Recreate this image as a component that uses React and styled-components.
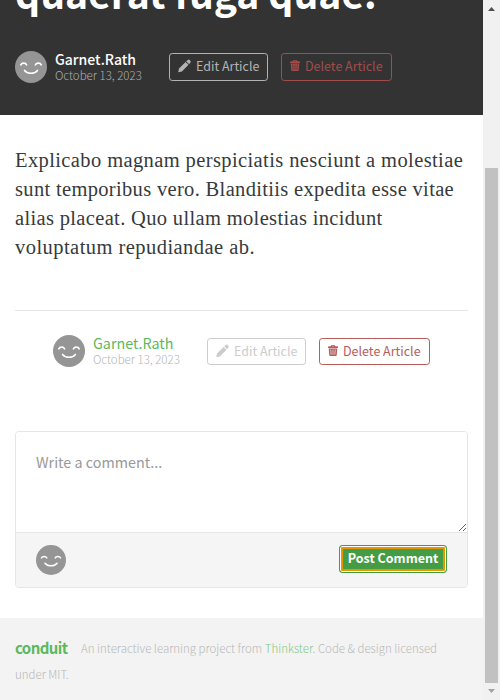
import React from "react";
import styled, { createGlobalStyle } from "styled-components";

const sans = `"Noto Sans CJK SC", "Noto Sans", sans-serif`;

const GlobalStyle = createGlobalStyle`
  * { box-sizing: border-box; }
  body { margin: 0; background: #fff; font-family: ${sans}; }
`;

const Window = styled.div`
  display: flex;
  width: 500px;
  height: 700px;
  overflow: hidden;
`;

const Page = styled.main`
  width: 483px;
  display: flex;
  flex-direction: column;
`;

const Banner = styled.header`
  height: 115px;
  flex: none;
  padding: 0 15px;
  background: #333;
  overflow: hidden;
`;

const Title = styled.h1`
  margin: -38px 0 0;
  height: 89px;
  line-height: 60px;
  font-size: 39.1px;
  font-weight: 700;
  color: #fff;
  white-space: nowrap;
`;

const Meta = styled.div`
  display: flex;
  height: 32px;
  padding-left: ${(p) => (p.$inset ? "53px" : "0")};
`;

const Face = styled.svg`
  display: block;
  flex: none;
`;

const Info = styled.div`
  width: 114px;
  padding-left: 8px;
  display: flex;
  flex-direction: column;
  white-space: nowrap;
`;

const Author = styled.a`
  height: 17px;
  line-height: 16px;
  font-size: ${(p) => (p.$dark ? 14 : 14.3)}px;
  font-weight: ${(p) => (p.$dark ? 500 : 400)};
  color: ${(p) => (p.$dark ? "#fff" : "#5cb85c")};
`;

const DateText = styled.span`
  line-height: 15px;
  font-size: 11.5px;
  font-weight: 300;
  color: ${(p) => (p.$dark ? "#b0b0b0" : "#b5b5b5")};
`;

const Actions = styled.div`
  display: flex;
  gap: 13px;
  padding: ${(p) => (p.$dark ? "2px" : "3px")} 0 0 8px;
`;

const OutlineButton = styled.button`
  display: flex;
  align-items: center;
  width: ${(p) => (p.$danger ? 111 : 99)}px;
  height: ${(p) => (p.$dark ? 28 : 27)}px;
  padding: 0 0 ${(p) => (p.$dark ? 3 : 2)}px 8px;
  border: 1px solid currentColor;
  border-radius: 3.2px;
  background: transparent;
  font: 400 12.5px ${sans};
  white-space: nowrap;
  color: ${(p) =>
    p.$danger ? (p.$dark ? "#a24c4b" : "#b85c5c") : p.$dark ? "#b3b3b3" : "#ccc"};
  svg { flex: none; margin-right: 5px; }
`;

const Body = styled.p`
  margin: 31px 15px 0;
  height: 164px;
  font-family: "Liberation Serif", serif;
  font-size: 20.5px;
  line-height: 29px;
  color: #373a3c;
  white-space: nowrap;
`;

const Line = styled.span`
  display: block;
  letter-spacing: ${(p) => p.$spacing}px;
`;

const Rule = styled.hr`
  width: 453px;
  height: 1px;
  margin: 0 15px 24px;
  border: 0;
  flex: none;
  background: #e5e5e5;
`;

const CommentCard = styled.form`
  width: 453px;
  height: 157px;
  margin: 64px 15px 0;
  border: 1px solid #e5e5e5;
  border-radius: 4px;
  overflow: hidden;
  flex: none;
`;

const CommentInput = styled.textarea`
  display: block;
  width: 100%;
  height: 100px;
  padding: 18px 20px;
  border: 0;
  outline: 0;
  background: #fff;
  font: 400 14.35px/24px ${sans};
  &::placeholder { color: #999; opacity: 1; }
`;

const CommentFooter = styled.div`
  display: flex;
  justify-content: space-between;
  height: 55px;
  padding: 12px 20px;
  border-top: 1px solid #e5e5e5;
  background: #f5f5f5;
`;

const PostButton = styled.button`
  width: 108px;
  height: 28px;
  padding: 0 0 3px;
  border: 1px solid #449d44;
  border-radius: 3.2px;
  box-shadow: inset 0 0 0 1px #fff, inset 0 0 0 3px #e59700;
  background: #449d44;
  color: #fff;
  font: 700 12.5px ${sans};
  white-space: nowrap;
`;

const Footer = styled.footer`
  margin-top: 30px;
  height: 82px;
  flex: none;
  padding: 17px 15px 0;
  background: #f3f3f3;
  font-size: 11.48px;
  font-weight: 300;
  line-height: 26px;
  color: #b8b8b8;
  white-space: nowrap;
`;

const FooterRow = styled.div`
  display: flex;
  height: 26px;
`;

const Logo = styled.a`
  width: 66px;
  font: 700 15px/26px ${sans};
  letter-spacing: -0.6px;
  color: #5cb85c;
`;

const FooterLink = styled.a`
  color: #5cb85c;
  opacity: 0.75;
`;

const Track = styled.aside`
  display: flex;
  flex-direction: column;
  align-items: center;
  width: 17px;
  height: 700px;
  background: #f1f1f1;
  svg { display: block; flex: none; }
`;

const Thumb = styled.div`
  width: 13px;
  height: 515px;
  margin-top: 151px;
  background: #c1c1c1;
`;

function Avatar({ size = 32 }) {
  return (
    <Face width={size} height={size} viewBox="0 0 32 32">
      <circle cx="16" cy="16" r="16" fill="#959595" />
      <g fill="none" stroke="#fff" strokeWidth="1.6" strokeLinecap="round">
        <path d="M5.8 13.8C6.8 11.6 10.6 11.6 11.6 13.8" />
        <path d="M20.4 13.8C21.4 11.6 25.2 11.6 26.2 13.8" />
        <path d="M9.6 19.4C12.6 23.2 19.4 23.2 22.4 19.4" />
      </g>
    </Face>
  );
}

function Pencil() {
  return (
    <svg width="13" height="14" viewBox="0 0 13 14" fill="currentColor">
      <path d="M0.2 13.2L1 9.5L7.6 2.9L10.5 5.8L3.9 12.4ZM8.2 2.3L9.8 0.9Q10.8 0.2 11.7 1.1L12.3 1.7Q13.1 2.6 12.4 3.5L11.1 5.2Z" />
    </svg>
  );
}

function Trash() {
  return (
    <svg width="10" height="12" viewBox="0 0 10 12" fill="currentColor">
      <path d="M0 2.2Q0 1.3 1 1.3H2.7Q3 0 4 0H6Q7 0 7.3 1.3H9Q10 1.3 10 2.2V3H0ZM3.8 1.3H6.2Q6 .8 5.7 .8H4.3Q4 .8 3.8 1.3Z" />
      <path
        fillRule="evenodd"
        d="M.7 3.4H9.3L8.7 10.2Q8.6 10.9 7.9 10.9H2.1Q1.4 10.9 1.3 10.2ZM2.5 4.6L2.8 9.8H3.4L3.1 4.6ZM4.7 4.6V9.8H5.3V4.6ZM6.9 4.6L6.6 9.8H7.2L7.5 4.6Z"
      />
    </svg>
  );
}

function ArticleMeta({ dark }) {
  return (
    <Meta $inset={!dark}>
      <Avatar />
      <Info>
        <Author $dark={dark}>Garnet.Rath</Author>
        <DateText $dark={dark}>October 13, 2023</DateText>
      </Info>
      <Actions $dark={dark}>
        <OutlineButton $dark={dark}><Pencil />Edit Article</OutlineButton>
        <OutlineButton $dark={dark} $danger><Trash />Delete Article</OutlineButton>
      </Actions>
    </Meta>
  );
}

export default function App() {
  return (
    <Window>
      <GlobalStyle />
      <Page>
        <Banner>
          <Title>quaerat fuga quae.</Title>
          <ArticleMeta dark />
        </Banner>
        <Body>
          <Line $spacing={0.39}>Explicabo magnam perspiciatis nesciunt a molestiae</Line>
          <Line $spacing={0.33}>sunt temporibus vero. Blanditiis expedita esse vitae</Line>
          <Line $spacing={0.34}>alias placeat. Quo ullam molestias incidunt</Line>
          <Line $spacing={0.45}>voluptatum repudiandae ab.</Line>
        </Body>
        <Rule />
        <ArticleMeta />
        <CommentCard>
          <CommentInput placeholder="Write a comment..." />
          <CommentFooter>
            <Avatar size={30} />
            <PostButton type="button">Post Comment</PostButton>
          </CommentFooter>
        </CommentCard>
        <Footer>
          <FooterRow>
            <Logo>conduit</Logo>
            <span>An interactive learning project from <FooterLink>Thinkster</FooterLink>. Code &amp; design licensed</span>
          </FooterRow>
          <FooterRow>under MIT.</FooterRow>
        </Footer>
      </Page>
      <Track>
        <svg width="17" height="17"><path d="M5 11L8.5 7L12 11Z" fill="#505050" /></svg>
        <Thumb />
        <svg width="17" height="17"><path d="M5 6L8.5 10L12 6Z" fill="#a3a3a3" /></svg>
      </Track>
    </Window>
  );
}
